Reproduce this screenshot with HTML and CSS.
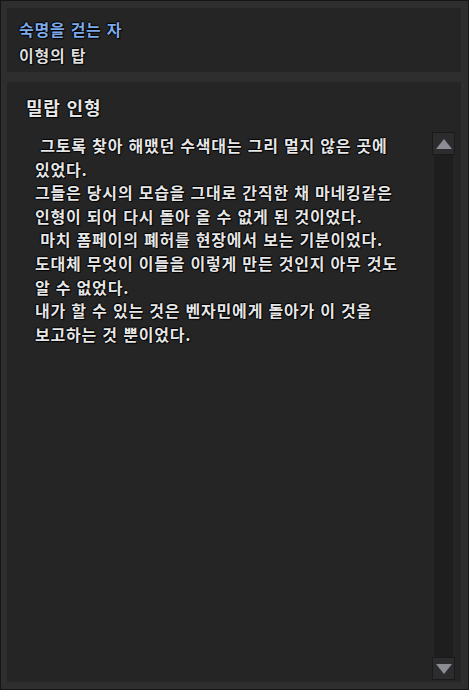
FILE: index.html
```html
<!DOCTYPE html>
<html lang="ko">
<head>
<meta charset="utf-8">
<link rel="stylesheet" href="styles.css">
</head>
<body>
<div class="frame">
  <section class="panel head">
    <div class="quest">숙명을 걷는 자</div>
    <div class="place">이형의 탑</div>
  </section>
  <section class="panel main">
    <h1 class="title">밀랍 인형</h1>
    <div class="scroll">
      <div class="text"><p> 그토록 찾아 해맸던 수색대는 그리 멀지 않은 곳에</p><p>있었다.</p><p>그들은 당시의 모습을 그대로 간직한 채 마네킹같은</p><p>인형이 되어 다시 돌아 올 수 없게 된 것이었다.</p><p> 마치 폼페이의 폐허를 현장에서 보는 기분이었다.</p><p>도대체 무엇이 이들을 이렇게 만든 것인지 아무 것도</p><p>알 수 없었다.</p><p>내가 할 수 있는 것은 벤자민에게 돌아가 이 것을</p><p>보고하는 것 뿐이었다.</p></div>
      <div class="bar">
        <div class="btn"><svg width="16" height="10" viewBox="0 0 16 10"><path d="M8 0 L16 10 L0 10 Z" fill="#8c8c95"/></svg></div>
        <div class="track"></div>
        <div class="btn"><svg width="16" height="10" viewBox="0 0 16 10"><path d="M0 0 L16 0 L8 10 Z" fill="#8c8c95"/></svg></div>
      </div>
    </div>
  </section>
</div>
</body>
</html>
```
FILE: styles.css
```css
* { box-sizing: border-box; margin: 0; padding: 0; }
html, body { width: 469px; height: 690px; background: #2e2e2e; }
body {
  font-family: "Noto Sans CJK KR", "Noto Sans", sans-serif;
  color: #e2e2e2;
}
.frame {
  width: 469px;
  height: 690px;
  border: 1px solid #151515;
  padding: 7px 7px 7px 6px;
  display: flex;
  flex-direction: column;
  gap: 10px;
}
.panel {
  background: #252525;
}
.head {
  height: 64px;
  padding: 8px 12px 0;
  font-size: 16px;
  line-height: 26px;
  font-weight: 700;
  letter-spacing: 0.75px;
  text-shadow: 1px 1px 1px #000, -1px 0 1px #000, 0 -1px 1px #000;
}
.quest { color: #7ea9e8; }
.place { color: #dcdcdc; }
.main {
  flex: 1;
  display: flex;
  flex-direction: column;
  padding-bottom: 2px;
}
.title {
  height: 50px;
  line-height: 50px;
  font-size: 18px;
  font-weight: 700;
  letter-spacing: 0.8px;
  padding-left: 19px;
  color: #e6e6e6;
  text-shadow: 1px 1px 1px #000, -1px 0 1px #000, 0 -1px 1px #000;
}
.scroll {
  flex: 1;
  display: flex;
}
.text {
  flex: 1;
  padding: 2px 0 0 28px;
  font-size: 16px;
  font-weight: 700;
  letter-spacing: 0.8px;
  line-height: 23.6px;
  white-space: pre;
  color: #e6e6e6;
  text-shadow: 1px 1px 1px #000, -1px 0 1px #000, 0 -1px 1px #000;
}
.bar {
  width: 23px;
  margin-right: 6px;
  display: flex;
  flex-direction: column;
  align-items: center;
}
.btn {
  width: 23px;
  height: 23px;
  background: #2c2c2e;
  border: 1px solid #1a1a1a;
  display: flex;
  align-items: center;
  justify-content: center;
}
.track {
  flex: 1;
  width: 19px;
  background: #1e1e1e;
}
```
